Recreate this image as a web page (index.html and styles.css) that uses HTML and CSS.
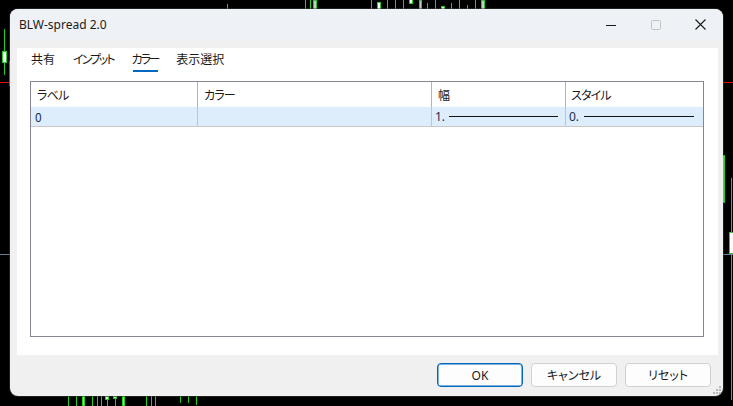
FILE: index.html
```html
<!DOCTYPE html>
<html lang="ja">
<head>
<meta charset="utf-8">
<title>BLW-spread 2.0</title>
<link rel="stylesheet" href="styles.css">
</head>
<body>
<div class="desk">
  <!-- chart background -->
  <div class="chart">
    <span class="hline red" style="left:0;top:82px;width:10px"></span>
    <span class="hline red" style="left:723px;top:82px;width:10px"></span>
    <span class="hline slate" style="left:0;top:254px;width:10px"></span>
    <span class="hline slate" style="left:723px;top:254px;width:10px"></span>

    <span class="wick" style="left:4px;top:29px;height:46px"></span>
    <span class="body" style="left:2px;top:51px;width:5px;height:12px"></span>
    <span class="wick" style="left:9px;top:61px;height:25px"></span>

    <span class="wick" style="left:722px;top:150px;height:76px"></span>
    <span class="body" style="left:722px;top:155px;width:3px;height:48px"></span>
    <span class="wick" style="left:731px;top:178px;height:222px"></span>
    <span class="body" style="left:729px;top:232px;width:5px;height:22px"></span>

    <span class="wick" style="left:227px;top:4px;height:6px"></span>
    <span class="wick" style="left:305px;top:0;height:10px"></span>
    <span class="wick" style="left:310px;top:0;height:10px"></span>
    <span class="body gray" style="left:313px;top:0;width:4px;height:10px"></span>
    <span class="wick" style="left:371px;top:0;height:10px"></span>
    <span class="body" style="left:377px;top:2px;width:4px;height:8px"></span>
    <span class="wick" style="left:387px;top:0;height:10px"></span>
    <span class="wick" style="left:395px;top:0;height:10px"></span>
    <span class="wick" style="left:403px;top:0;height:10px"></span>
    <span class="body" style="left:409px;top:-2px;width:4px;height:6px"></span>
    <span class="body gray" style="left:419px;top:0;width:3px;height:10px"></span>
    <span class="wick" style="left:427px;top:3px;height:7px"></span>
    <span class="wick" style="left:435px;top:0;height:10px"></span>
    <span class="body" style="left:441px;top:6px;width:4px;height:4px"></span>
    <span class="wick" style="left:451px;top:3px;height:7px"></span>
    <span class="wick" style="left:459px;top:0;height:10px"></span>
    <span class="wick" style="left:467px;top:5px;height:5px"></span>
    <span class="wick" style="left:475px;top:0;height:10px"></span>
    <span class="body gray" style="left:481px;top:0;width:4px;height:10px"></span>

    <span class="wick" style="left:68px;top:396px;height:10px"></span>
    <span class="wick" style="left:76px;top:396px;height:10px"></span>
    <span class="body gray" style="left:82px;top:396px;width:3px;height:10px"></span>
    <span class="wick" style="left:92px;top:396px;height:10px"></span>
    <span class="wick" style="left:97px;top:396px;height:10px"></span>
    <span class="wick" style="left:101px;top:396px;height:10px"></span>
    <span class="body" style="left:105px;top:396px;width:4px;height:4px"></span>
    <span class="wick" style="left:107px;top:400px;height:6px"></span>
    <span class="body" style="left:113px;top:396px;width:4px;height:3px"></span>
    <span class="wick" style="left:115px;top:399px;height:7px"></span>
    <span class="body gray" style="left:122px;top:396px;width:3px;height:10px"></span>
    <span class="wick" style="left:146px;top:396px;height:10px"></span>
    <span class="wick" style="left:151px;top:396px;height:10px"></span>
    <span class="wick" style="left:155px;top:396px;height:10px"></span>
    <span class="wick" style="left:180px;top:396px;height:7px"></span>
    <span class="wick" style="left:188px;top:396px;height:7px"></span>
    <span class="wick" style="left:196px;top:396px;height:9px"></span>
  </div>

  <div class="window">
    <div class="titlebar">
      <span class="title">BLW-spread 2.0</span>
      <div class="controls">
        <span class="ctl"><svg width="10" height="10" viewBox="0 0 10 10"><path d="M0 5.5H10" stroke="#1a1a1a" stroke-width="1"/></svg></span>
        <span class="ctl"><svg width="10" height="10" viewBox="0 0 10 10"><rect x="0.5" y="0.5" width="9" height="9" rx="1" fill="none" stroke="#c2c2c2" stroke-width="1"/></svg></span>
        <span class="ctl"><svg width="11" height="11" viewBox="0 0 11 11"><path d="M0.5 0.5L10.5 10.5M10.5 0.5L0.5 10.5" stroke="#1a1a1a" stroke-width="1.1"/></svg></span>
      </div>
    </div>
    <div class="frame">
      <div class="panel">
        <div class="tabs">
          <span class="tab">共有</span>
          <span class="tab kana">インプット</span>
          <span class="tab kana active">カラー</span>
          <span class="tab">表示選択</span>
        </div>
        <div class="grid">
          <div class="row head">
            <div class="cell c1">ラベル</div>
            <div class="cell c2">カラー</div>
            <div class="cell c3">幅</div>
            <div class="cell c4">スタイル</div>
          </div>
          <div class="row data">
            <div class="cell c1">0</div>
            <div class="cell c2"></div>
            <div class="cell c3"><span class="num">1.</span><span class="stroke"></span></div>
            <div class="cell c4"><span class="num">0.</span><span class="stroke"></span></div>
          </div>
        </div>
      </div>
      <div class="footer">
        <button class="btn primary">OK</button>
        <button class="btn">キャンセル</button>
        <button class="btn">リセット</button>
      </div>
      <div class="grip">
        <svg width="8" height="8" viewBox="0 0 8 8" fill="#b8b8b8"><rect x="6" y="0" width="2" height="2"/><rect x="3" y="3" width="2" height="2"/><rect x="6" y="3" width="2" height="2"/><rect x="0" y="6" width="2" height="2"/><rect x="3" y="6" width="2" height="2"/><rect x="6" y="6" width="2" height="2"/></svg>
      </div>
    </div>
  </div>
</div>
</body>
</html>
```
FILE: styles.css
```css
* { box-sizing: border-box; }
html, body { margin: 0; padding: 0; }
body {
  width: 733px;
  height: 406px;
  overflow: hidden;
  background: #000;
  font-family: "Noto Sans", "Noto Sans CJK JP", sans-serif;
  font-size: 12px;
  color: #1a1a1a;
}
.desk { position: relative; width: 733px; height: 406px; overflow: hidden; }

.chart { position: absolute; inset: 0; }
.hline { position: absolute; height: 1px; }
.hline.red { background: #e01010; }
.hline.slate { background: #6a7f95; }
.wick { position: absolute; width: 1px; background: #1fd01f; }
.body { position: absolute; background: #fff; border: 1px solid #1fd01f; }
.body.gray { background: #c8c8c8; border-color: #1fd01f; }

.window {
  position: absolute;
  left: 10px;
  top: 9px;
  width: 713px;
  height: 387px;
  background: #f0f0f0;
  border-radius: 8px;
  overflow: hidden;
  display: flex;
  flex-direction: column;
  box-shadow: 0 0 0 1px rgba(60,60,60,0.5);
}
.titlebar {
  height: 31px;
  flex: none;
  background: #eef2f6;
  display: flex;
  align-items: center;
  padding-left: 9px;
}
.title { font-size: 12px; color: #1a1a1a; letter-spacing: 0; }
.controls { margin-left: auto; display: flex; height: 100%; }
.ctl { width: 45px; display: flex; align-items: center; justify-content: center; }
.ctl:nth-child(1) { padding-top: 1px; }

.frame {
  flex: 1;
  position: relative;
  display: flex;
  flex-direction: column;
  padding: 8px 5px 0 7px;
}
.panel {
  height: 307px;
  background: #fff;
  padding: 0 14px 0 13px;
  display: flex;
  flex-direction: column;
  font-family: "Noto Sans CJK JP", sans-serif;
  font-feature-settings: "palt";
}
.tabs {
  display: flex;
  gap: 18px;
  padding: 2px 0 0 1px;
  height: 22px;
}
.tab {
  font-size: 12px;
  line-height: 17px;
  height: 22px;
  color: #1a1a1a;
  position: relative;
}
.tab.kana { letter-spacing: -2px; }
.tab.active { letter-spacing: -2.2px; }
.tab.active::after {
  content: "";
  position: absolute;
  left: 1px;
  right: 0;
  bottom: 0;
  height: 2px;
  background: #0067c0;
}
.grid {
  margin-top: 11px;
  height: 256px;
  border: 1px solid #828790;
  display: flex;
  flex-direction: column;
}
.row { display: flex; }
.row.head { height: 25px; }
.row.data { height: 20px; background: #deedfb; border-bottom: 1px solid #c8c8c8; }
.cell {
  display: flex;
  align-items: center;
  font-size: 12px;
  white-space: nowrap;
}
.head .cell { letter-spacing: -0.8px; }
.c1 { width: 167px; }
.c2 { width: 234px; }
.c3 { width: 134px; }
.c4 { flex: 1; }
.head .cell { padding-left: 6px; border-right: 1px solid #b4b4b4; color: #1a1a1a; }
.head .c4 { border-right: none; padding-left: 5px; }
.data .cell { padding-left: 4px; border-right: 1px solid #c4c4c4; color: #1b2f4f; }
.data .c4 { border-right: none; padding-left: 3px; }
.data .c3 { padding-left: 3px; }
.num { font-family: "Noto Sans", sans-serif; }
.stroke { height: 1px; background: #111; margin-left: 4px; width: 109px; }
.data .c4 .stroke { width: 110px; margin-left: 5px; }

.footer {
  display: flex;
  justify-content: flex-end;
  gap: 8px;
  padding: 8px 7px 0 0;
}
.btn {
  width: 86px;
  height: 24px;
  border: 1px solid #d0d0d0;
  border-radius: 4px;
  background: #fdfdfd;
  font-family: "Noto Sans", "Noto Sans CJK JP", sans-serif;
  font-feature-settings: "palt";
  font-size: 12px;
  color: #1a1a1a;
  padding: 0;
}
.btn.primary { border: 1px solid #0067c0; box-shadow: inset 0 0 0 0.5px #0067c0; }
.grip { position: absolute; right: 2px; bottom: 2px; line-height: 0; }
```
